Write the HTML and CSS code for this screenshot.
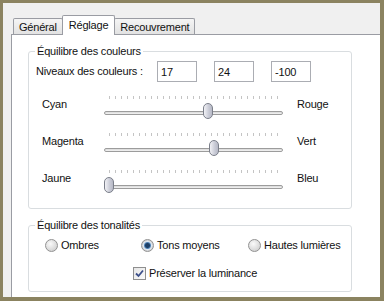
FILE: index.html
```html
<!DOCTYPE html>
<html lang="fr">

<head>
    <meta charset="UTF-8">
    <title>Réglage</title>
    <link rel="stylesheet" href="styles.css">
</head>

<body>

    <div class="window">
        <div class="tabs">
            <div class="tab">Général</div>
            <div class="tab active">Réglage</div>
            <div class="tab">Recouvrement</div>
        </div>

        <div class="panel">
            <fieldset class="group">
                <legend>Équilibre des couleurs</legend>

                <div class="levels">
                    <span class="levels-label">Niveaux des couleurs :</span>
                    <input type="text" value="17">
                    <input type="text" value="24">
                    <input type="text" value="-100">
                </div>

                <div class="slider-row">
                    <span class="slider-label">Cyan</span>
                    <div class="slider">
                        <div class="ticks"></div>
                        <div class="track"></div>
                        <div class="thumb" style="left: 99px"></div>
                    </div>
                    <span class="slider-label right">Rouge</span>
                </div>
                <div class="slider-row">
                    <span class="slider-label">Magenta</span>
                    <div class="slider">
                        <div class="ticks"></div>
                        <div class="track"></div>
                        <div class="thumb" style="left: 105px"></div>
                    </div>
                    <span class="slider-label right">Vert</span>
                </div>
                <div class="slider-row">
                    <span class="slider-label">Jaune</span>
                    <div class="slider">
                        <div class="ticks"></div>
                        <div class="track"></div>
                        <div class="thumb" style="left: 0px"></div>
                    </div>
                    <span class="slider-label right">Bleu</span>
                </div>
            </fieldset>

            <fieldset class="group tones">
                <legend>Équilibre des tonalités</legend>

                <div class="radios">
                    <label class="radio"><span class="dot"></span>Ombres</label>
                    <label class="radio"><span class="dot checked"></span>Tons moyens</label>
                    <label class="radio"><span class="dot"></span>Hautes lumières</label>
                </div>

                <label class="check">
                    <span class="box">
                        <svg width="9" height="9" viewBox="0 0 9 9">
                            <path d="M1 4.5 L3.5 7 L8 1.5" fill="none" stroke="#3c4f8a" stroke-width="1.8" />
                        </svg>
                    </span>
                    Préserver la luminance
                </label>
            </fieldset>
        </div>
    </div>

</body>

</html>
```

FILE: styles.css
```css
body {
    font-family: "Liberation Sans", Arial, sans-serif;
    font-size: 11px;
    line-height: 13px;
    letter-spacing: -0.2px;
    color: #111;
    margin: 0;
    padding: 0;
    width: 384px;
    height: 301px;
    background-color: #8b8360;
    overflow: hidden;
}

.window {
    margin: 3px 4px 0 3px;
    height: 294px;
    background-color: #f0f0f0;
    display: flex;
    flex-direction: column;
}

/* tab strip */
.tabs {
    display: flex;
    align-items: flex-end;
    padding: 12px 0 0 10px;
    height: 20px;
}

.tab {
    box-sizing: border-box;
    height: 16px;
    margin-bottom: 1px;
    padding: 0 5px;
    line-height: 16px;
    border: 1px solid #9a9ca3;
    border-bottom: none;
    border-radius: 2px 2px 0 0;
    background: linear-gradient(#f5f5f5, #e2e2e2);
}

.tab + .tab {
    margin-left: -1px;
}

.tab.active {
    height: 20px;
    margin-bottom: 0;
    line-height: 19px;
    padding: 0 6px;
    background: #fff;
    position: relative;
    z-index: 1;
}

.panel {
    flex: 1;
    margin: -1px 0 0 8px;
    padding: 10px 28px 0 16px;
    background-color: #fff;
    border-top: 1px solid #9a9ca3;
    border-left: 1px solid #9a9ca3;
}

/* group boxes */
.group {
    margin: 0;
    padding: 0 0 2px 7px;
    border: 1px solid #d9dde0;
    border-radius: 3px;
}

.group legend {
    margin-left: -1px;
    padding: 0 2px;
}

.levels {
    display: flex;
    align-items: center;
    margin: 3px 0 13px;
    height: 21px;
}

.levels-label {
    width: 121px;
}

.levels input {
    box-sizing: border-box;
    width: 40px;
    height: 21px;
    margin: 0 17px 0 0;
    padding: 0 3px;
    border: 1px solid #abadb3;
    font-family: inherit;
    font-size: 11px;
    letter-spacing: -0.2px;
    color: #111;
}

.slider-row {
    display: flex;
    align-items: flex-start;
    height: 37px;
    margin-left: 6px;
}

.slider-label {
    width: 62px;
    margin-top: 3px;
}

.slider-label.right {
    width: auto;
    margin-left: 14px;
}

.slider {
    position: relative;
    width: 179px;
    height: 26px;
}

.ticks {
    margin: 1px 0 0 5px;
    width: 170px;
    height: 3px;
    background: repeating-linear-gradient(to right, #c4c4c4 0 1px, transparent 1px 6px);
}

.track {
    box-sizing: border-box;
    margin-top: 12px;
    height: 4px;
    border: 1px solid #9c9c9c;
    border-radius: 2px;
    background: linear-gradient(#d8d8d8, #f4f4f4);
}

.thumb {
    position: absolute;
    top: 8px;
    box-sizing: border-box;
    width: 10px;
    height: 16px;
    border: 1px solid #7b7f8a;
    border-radius: 5px;
    background: linear-gradient(to right, #f2f2f6, #c9cbd6 60%, #b7b9c6);
}

/* tonal balance */
.tones {
    margin-top: 10px;
    padding-bottom: 11px;
}

.radios {
    display: grid;
    grid-template-columns: 96px 107px auto;
    margin: 7px 0 0 9px;
}

.radio {
    display: flex;
    align-items: center;
    gap: 3px;
}

.dot {
    box-sizing: border-box;
    width: 13px;
    height: 13px;
    border: 1px solid #929292;
    border-radius: 50%;
    background: radial-gradient(circle at 40% 35%, #fafafa, #d6d6d6 70%, #c8c8c8);
}

.dot.checked {
    background: radial-gradient(circle, #1d3f66 0 2px, #4f84b8 3px, #dfe8f2 4px, #d0d0d0 70%);
}

.check {
    display: flex;
    align-items: center;
    gap: 3px;
    margin: 15px 0 0 97px;
}

.box {
    box-sizing: border-box;
    width: 13px;
    height: 13px;
    border: 1px solid #8f8f8f;
    background: linear-gradient(135deg, #e6e6e6, #fafafa);
    display: flex;
    align-items: center;
    justify-content: center;
}
```
